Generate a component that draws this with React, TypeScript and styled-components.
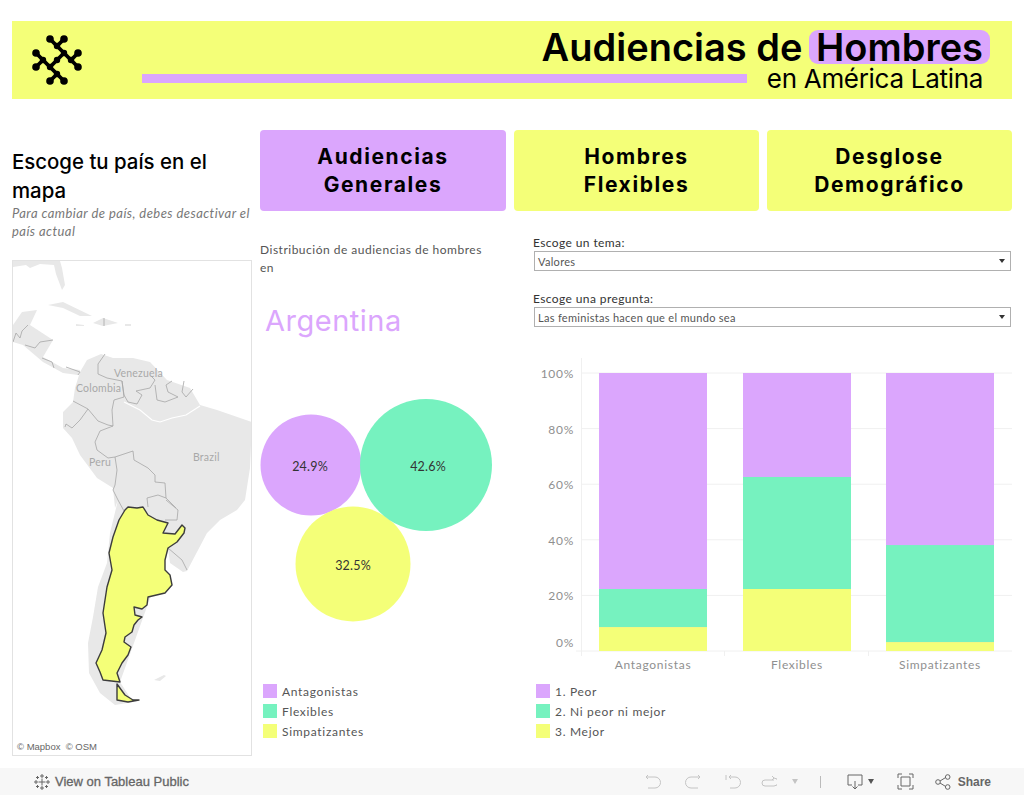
import React from 'react';
import styled, { createGlobalStyle } from 'styled-components';

const PURPLE = '#dba6fd';
const GREEN = '#76f2bf';
const YELLOW = '#f4ff78';

const GlobalStyle = createGlobalStyle`
    html, body {
        margin: 0;
        padding: 0;
        background: #fff;
        font-family: 'Lato', 'Liberation Sans', sans-serif;
    }
`;

const Logo = () => (
    <LogoSvg viewBox="-2 -1 50 50" aria-hidden="true">
        <g stroke="#000" strokeWidth="3.8" fill="none" strokeLinecap="round">
            <path d="M16 3 23 10 30 3" />
            <path d="M23 10 30 17 37 24 44 17M37 24 44 31" />
            <path d="M30 17 23 24 16 31 9 24 2 17M9 24 2 31" />
            <path d="M16 31 23 38 16 45M23 38 30 45" />
        </g>
        <g fill="#000">
            {[
                [16, 3], [30, 3], [2, 17], [44, 17], [2, 31], [44, 31], [16, 45], [30, 45],
            ].map(([cx, cy]) => (
                <circle key={`${cx}-${cy}`} cx={cx} cy={cy} r={3.8} />
            ))}
            {[
                [23, 24], [16, 31], [30, 17], [23, 38], [23, 10], [37, 24], [9, 24],
            ].map(([cx, cy]) => (
                <circle key={`${cx}-${cy}`} cx={cx} cy={cy} r={3.2} />
            ))}
        </g>
    </LogoSvg>
);

const SouthAmericaMap = () => (
    <MapSvg viewBox="12 260 240 496" aria-hidden="true">
        <g fill="#e8e8e8">
            <path d="M101 354 87 360 80 372 75 388 73 402 63 412 63 428 72 438 80 455 97 478 113 488 115 508 118 500 110 533 107 563 98 587 93 617 88 643 89 673 100 693 115 705 133 702 120 682 168 548 170 563 183 572 187 571 197 552 207 533 220 520 237 510 245 500 250 468 252 422 217 410 200 405 190 388 167 380 150 362 133 358 113 358Z" />
            <path d="M13 325 22 312 37 310 30 325 53 340 43 357 63 368 80 370 78 375 63 373 43 362 23 345 13 342Z" />
            <path d="M13 261 60 261 62 268 65 285 62 290 56 274 54 265 40 264 30 268 26 265 13 267Z" />
            <path d="M48 305 63 302 92 316 80 316 63 308Z" />
            <path d="M93 323 103 318 118 323 103 326Z" />
            <path d="M76 324 84 325 84 326 76 326ZM125 324 131 324 131 326 125 326Z" />
            <path d="M154 680 164 675 166 676 160 681Z" />
        </g>
        <g stroke="#fff" strokeWidth="1.2" fill="none">
            <path d="M124 402 140 410 152 420 160 422 172 418 186 415 200 406" />
        </g>
        <g stroke="#a6a6a6" strokeWidth="0.8" fill="none">
            <path d="M105 354 98 364 98 374 107 378 122 381 124 395 128 402 137 404 142 395 136 391 150 388 155 380 151 376" />
            <path d="M155 385 157 400 165 402 178 397 168 392 166 385 172 381 M184 381 182 392 186 397 193 389" />
            <path d="M122 381 124 397 114 400 112 410 113 426 108 425 98 421 88 409 73 401" />
            <path d="M88 409 80 420 72 428 66 424 65 427" />
            <path d="M113 426 100 431 95 442 97 450 108 458 115 457 133 451 134 460 148 468 155 475 155 482 165 483 166 498 176 508" />
            <path d="M115 457 117 470 115 485 113 490 118 500 124 511" />
            <path d="M148 507 147 498 158 495 166 498" />
            <path d="M166 500 178 510 177 520 165 520" />
            <path d="M168 548 182 560 187 570" />
            <path d="M13 342 16 333 20 338 22 331 28 325 M25 345 35 348 40 342 53 340 M42 358 52 362 54 368 M66 367 80 372 78 375" />
            <path d="M104 318 104 326" />
        </g>
        <MapLabel x="114" y="377">Venezuela</MapLabel>
        <MapLabel x="76" y="392">Colombia</MapLabel>
        <MapLabel x="89" y="466">Peru</MapLabel>
        <MapLabel x="193" y="461">Brazil</MapLabel>
        <g fill={YELLOW} stroke="#3c3c3c" strokeWidth="1.4" strokeLinejoin="round">
            <path d="M125 510 128 507 137 508 143 507 148 515 157 520 168 523 163 533 175 534 182 525 185 528 184 533 177 542 168 548 165 560 165 570 170 575 172 585 165 593 148 597 147 605 142 609 134 607 135 615 142 617 138 620 134 625 132 632 125 637 124 642 131 647 128 655 122 663 117 673 120 682 103 680 100 672 96 663 102 650 106 633 103 613 107 587 112 570 109 553 113 537 119 520Z" />
            <path d="M117 684 125 695 133 700 139 700 128 702 117 700Z" />
        </g>
    </MapSvg>
);

const Bubbles = () => (
    <BubbleSvg viewBox="260 385 246 240" aria-hidden="true">
        <circle cx="311" cy="465" r="50.5" fill={PURPLE} />
        <circle cx="353" cy="564" r="57.5" fill={YELLOW} />
        <circle cx="426" cy="465" r="66" fill={GREEN} />
        <BubbleLabel x="310" y="471">24.9%</BubbleLabel>
        <BubbleLabel x="428" y="471">42.6%</BubbleLabel>
        <BubbleLabel x="353" y="570">32.5%</BubbleLabel>
    </BubbleSvg>
);

const AXIS_TOP = 373;
const AXIS_BOTTOM = 651;
const AXIS_HEIGHT = AXIS_BOTTOM - AXIS_TOP;

const bars = [
    { name: 'Antagonistas', x: 599, center: 653, mejor: 8.6, ni: 13.7 },
    { name: 'Flexibles', x: 743, center: 797, mejor: 22.3, ni: 40.3 },
    { name: 'Simpatizantes', x: 886, center: 940, mejor: 3.2, ni: 34.9 },
];

const StackedChart = () => (
    <ChartSvg viewBox="533 355 479 320" aria-hidden="true">
        {[0, 20, 40, 60, 80, 100].map((tick) => {
            const y = AXIS_BOTTOM - (AXIS_HEIGHT * tick) / 100;
            return (
                <g key={tick}>
                    <line x1={tick === 0 ? 576 : 581} x2="1012" y1={y} y2={y} stroke="#f0f0f0" />
                    <AxisLabel x="574" y={tick === 0 ? 647 : y + 5} textAnchor="end">
                        {tick}%
                    </AxisLabel>
                </g>
            );
        })}
        <line x1="581.5" x2="581.5" y1="358" y2="656" stroke="#f0f0f0" />
        <line x1="724.5" x2="724.5" y1="651" y2="656" stroke="#f0f0f0" />
        <line x1="868.5" x2="868.5" y1="651" y2="656" stroke="#f0f0f0" />
        {bars.map((bar) => {
            const mejorH = (AXIS_HEIGHT * bar.mejor) / 100;
            const niH = (AXIS_HEIGHT * bar.ni) / 100;
            return (
                <g key={bar.name}>
                    <rect x={bar.x} y={AXIS_TOP} width="108" height={AXIS_HEIGHT} fill={PURPLE} />
                    <rect x={bar.x} y={AXIS_BOTTOM - mejorH - niH} width="108" height={niH} fill={GREEN} />
                    <rect x={bar.x} y={AXIS_BOTTOM - mejorH} width="108" height={mejorH} fill={YELLOW} />
                    <AxisLabel x={bar.center} y="669" textAnchor="middle">
                        {bar.name}
                    </AxisLabel>
                </g>
            );
        })}
    </ChartSvg>
);

const Legend = ({ items, top }: { items: [string, string][]; top: number }) => (
    <LegendList $top={top}>
        {items.map(([label, color]) => (
            <LegendRow key={label}>
                <Swatch $color={color} />
                {label}
            </LegendRow>
        ))}
    </LegendList>
);

const App = () => (
    <Page>
        <GlobalStyle />
        <Header>
            <Logo />
            <TitleBlock>
                <TitleRow>
                    Audiencias de <Highlight>Hombres</Highlight>
                </TitleRow>
                <SubRow>
                    <TitleBar />
                    <Subtitle>en América Latina</Subtitle>
                </SubRow>
            </TitleBlock>
        </Header>

        <Main>
            <LeftColumn>
                <Heading>Escoge tu país en el mapa</Heading>
                <Hint>Para cambiar de país, debes desactivar el país actual</Hint>
                <MapFrame>
                    <SouthAmericaMap />
                    <Attribution>© Mapbox  © OSM</Attribution>
                </MapFrame>
            </LeftColumn>

            <RightArea>
                <Tabs>
                    <Tab $active>
                        Audiencias
                        <br />
                        Generales
                    </Tab>
                    <Tab>
                        Hombres
                        <br />
                        Flexibles
                    </Tab>
                    <Tab>
                        Desglose
                        <br />
                        Demográfico
                    </Tab>
                </Tabs>

                <Panels>
                    <MidPanel>
                        <Intro>Distribución de audiencias de hombres en</Intro>
                        <Country>Argentina</Country>
                        <Bubbles />
                        <Legend
                            top={56}
                            items={[
                                ['Antagonistas', PURPLE],
                                ['Flexibles', GREEN],
                                ['Simpatizantes', YELLOW],
                            ]}
                        />
                    </MidPanel>

                    <ChartPanel>
                        <FilterLabel>Escoge un tema:</FilterLabel>
                        <FilterSelect>
                            Valores
                            <SelectCaret />
                        </FilterSelect>
                        <FilterLabel $spaced>Escoge una pregunta:</FilterLabel>
                        <FilterSelect>
                            Las feministas hacen que el mundo sea
                            <SelectCaret />
                        </FilterSelect>
                        <StackedChart />
                        <Legend
                            top={6}
                            items={[
                                ['1. Peor', PURPLE],
                                ['2. Ni peor ni mejor', GREEN],
                                ['3. Mejor', YELLOW],
                            ]}
                        />
                    </ChartPanel>
                </Panels>
            </RightArea>
        </Main>

        <Toolbar>
            <PublicLink>
                <ToolIcon width="18" height="18" viewBox="0 0 18 18">
                    <path d="M9 5.500v7M5.500 9h7M9 1v4M7 3h4M9 13v4M7 15h4M1 9h4M3 7v4M13 9h4M15 7v4M4.500 3v3M3 4.500h3M13.500 3v3M12 4.500h3M4.500 12v3M3 13.500h3M13.500 12v3M12 13.500h3" />
                </ToolIcon>
                View on Tableau Public
            </PublicLink>
            <ToolGroup>
                <ToolIcon $disabled width="16" height="16" viewBox="0 0 16 16">
                    <path d="M1 3h9a5 5 0 0 1 0 11H3M3 1 1 3l2 2" />
                </ToolIcon>
                <ToolIcon $disabled $gap={24} width="16" height="16" viewBox="0 0 16 16">
                    <path d="M15 3H6a5 5 0 0 0 0 11h7M13 1l2 2-2 2" />
                </ToolIcon>
                <ToolIcon $disabled $gap={24} width="16" height="16" viewBox="0 0 16 16">
                    <path d="M1 1v5M4 3h6a5 5 0 0 1 0 11H5M6 1 4 3l2 2" />
                </ToolIcon>
                <ToolIcon $disabled $gap={20} width="16" height="16" viewBox="0 0 16 16">
                    <path d="M12 4h1a3 3 0 0 1 0 8H4a3 3 0 0 1 0-6h9M11 2l2 2-2 2" />
                </ToolIcon>
                <ToolCaret $disabled $gap={15} />
                <ToolDivider />
                <ToolIcon $gap={26} width="16" height="16" viewBox="0 0 16 16">
                    <path d="M5 11H1V1h14v10h-4M8 7v8M5.500 12.500 8 15l2.500-2.500" />
                </ToolIcon>
                <ToolCaret $gap={5} />
                <ToolIcon $gap={23} width="17" height="17" viewBox="0 0 17 17">
                    <path d="M1 5V1h4M12 1h4v4M16 12v4h-4M5 16H1v-4M4 4h9v9H4z" />
                </ToolIcon>
                <ToolIcon $gap={21} width="16" height="16" viewBox="0 0 16 16">
                    <path d="M5 7 10.500 3.600M5 9l5.500 3.400" />
                    <circle cx="3" cy="8" r="2.300" />
                    <circle cx="12.700" cy="3" r="2.300" />
                    <circle cx="12.700" cy="13" r="2.300" />
                </ToolIcon>
                <ShareLabel>Share</ShareLabel>
            </ToolGroup>
        </Toolbar>
    </Page>
);

const Page = styled.div`
    width: 1024px;
    height: 795px;
    display: flex;
    flex-direction: column;
    overflow: hidden;
`;

const Header = styled.header`
    height: 78px;
    margin: 21px 12px 0;
    background: ${YELLOW};
    display: flex;
    align-items: flex-start;
`;

const LogoSvg = styled.svg`
    width: 50px;
    height: 50px;
    margin: 14px 0 0 20px;
    flex: none;
`;

const TitleBlock = styled.div`
    flex: 1;
    display: flex;
    flex-direction: column;
    padding: 9px 22px 0 60px;
    font-family: 'Inter', 'Liberation Sans', sans-serif;
    color: #000;
`;

const TitleRow = styled.div`
    height: 34px;
    font-size: 38px;
    line-height: 34px;
    font-weight: 600;
    letter-spacing: 0;
    text-align: right;
    white-space: pre;
`;

const Highlight = styled.span`
    display: inline-block;
    background: ${PURPLE};
    border-radius: 9px;
    padding: 0 7px;
    margin-left: -3px;
`;

const SubRow = styled.div`
    display: flex;
    align-items: center;
    justify-content: space-between;
`;

const TitleBar = styled.div`
    width: 605px;
    height: 9px;
    margin-top: 1px;
    background: ${PURPLE};
`;

const Subtitle = styled.div`
    margin: 1px 7px 0 0;
    font-size: 26px;
    line-height: 27px;
    font-weight: 400;
    letter-spacing: -0.3px;
`;

const Main = styled.main`
    flex: 1;
    min-height: 0;
    display: grid;
    grid-template-columns: 240px 752px;
    column-gap: 8px;
    padding: 31px 12px 0;
`;

const LeftColumn = styled.section`
    display: flex;
    flex-direction: column;
`;

const Heading = styled.h2`
    margin: 17px 0 0;
    font-family: 'Inter', 'Liberation Sans', sans-serif;
    font-size: 20.4px;
    line-height: 29px;
    font-weight: 500;
    color: #000;
`;

const Hint = styled.p`
    margin: -1px 0 0;
    font-size: 13px;
    line-height: 18px;
    font-style: italic;
    letter-spacing: 0.45px;
    color: #777;
`;

const MapFrame = styled.div`
    position: relative;
    width: 240px;
    height: 496px;
    margin-top: 20px;
    box-sizing: border-box;
    border: 1px solid #e2e2e2;
    overflow: hidden;
`;

const MapSvg = styled.svg`
    display: block;
    width: 240px;
    height: 496px;
    margin: -1px;
`;

const MapLabel = styled.text`
    font-size: 10.5px;
    letter-spacing: 0.2px;
    fill: #a8a8a8;
`;

const Attribution = styled.div`
    position: absolute;
    left: 2px;
    bottom: 2px;
    padding: 0 2px;
    font-family: 'Liberation Sans', sans-serif;
    font-size: 9.5px;
    line-height: 13px;
    white-space: pre;
    color: #666;
    background: rgba(255, 255, 255, 0.7);
`;

const RightArea = styled.section`
    display: flex;
    flex-direction: column;
`;

const Tabs = styled.nav`
    display: grid;
    grid-template-columns: 246px 245px 245px;
    column-gap: 8px;
`;

const Tab = styled.div<{ $active?: boolean }>`
    height: 81px;
    display: flex;
    align-items: center;
    justify-content: center;
    text-align: center;
    background: ${(p) => (p.$active ? PURPLE : YELLOW)};
    border-radius: 4px;
    font-family: 'Inter', 'Liberation Sans', sans-serif;
    font-size: 21px;
    line-height: 28px;
    font-weight: 700;
    letter-spacing: 1.6px;
    color: #000;
`;

const Panels = styled.div`
    display: grid;
    grid-template-columns: 246px 478px;
    column-gap: 27px;
    margin-top: 21px;
`;

const MidPanel = styled.div`
    display: flex;
    flex-direction: column;
    padding-top: 9px;
`;

const Intro = styled.p`
    margin: 0;
    width: 232px;
    font-size: 12px;
    line-height: 18px;
    letter-spacing: 0.5px;
    color: #555;
`;

const Country = styled.div`
    margin: 26px 0 0 5px;
    font-family: 'Inter', 'Liberation Sans', sans-serif;
    font-size: 29px;
    line-height: 36px;
    letter-spacing: 0.5px;
    color: ${PURPLE};
`;

const BubbleSvg = styled.svg`
    display: block;
    width: 246px;
    height: 240px;
    margin-top: 46px;
`;

const BubbleLabel = styled.text`
    font-size: 12.5px;
    letter-spacing: 0.2px;
    fill: #333;
    text-anchor: middle;
`;

const LegendList = styled.ul<{ $top: number }>`
    list-style: none;
    margin: ${(p) => p.$top}px 0 0 3px;
    padding: 0;
`;

const LegendRow = styled.li`
    display: flex;
    align-items: center;
    gap: 5px;
    height: 20px;
    font-size: 12px;
    letter-spacing: 0.7px;
    color: #555;
`;

const Swatch = styled.span<{ $color: string }>`
    width: 14px;
    height: 14px;
    flex: none;
    background: ${(p) => p.$color};
`;

const ChartPanel = styled.div`
    display: flex;
    flex-direction: column;
    align-items: flex-start;
    padding-top: 3px;
`;

const FilterLabel = styled.div<{ $spaced?: boolean }>`
    margin-top: ${(p) => (p.$spaced ? '20px' : '0')};
    font-size: 12px;
    line-height: 15px;
    letter-spacing: 0.4px;
    color: #333;
`;

const FilterSelect = styled.div`
    box-sizing: border-box;
    width: 477px;
    height: 20px;
    margin: 1px 0 0 1px;
    padding: 0 4px 0 3px;
    display: flex;
    align-items: center;
    justify-content: space-between;
    border: 1px solid #b0b0b0;
    font-size: 11px;
    letter-spacing: 0.3px;
    color: #555;
`;

const SelectCaret = styled.span`
    width: 0;
    height: 0;
    margin-right: 1px;
    border-left: 3px solid transparent;
    border-right: 3px solid transparent;
    border-top: 4px solid #333;
`;

const ChartSvg = styled.svg`
    display: block;
    width: 479px;
    height: 320px;
    margin-top: 28px;
`;

const AxisLabel = styled.text`
    font-size: 12px;
    letter-spacing: 0.7px;
    fill: #8f8f8f;
`;

const Toolbar = styled.footer`
    height: 27px;
    flex: none;
    display: flex;
    align-items: center;
    justify-content: space-between;
    padding: 0 33px;
    background: #f7f7f7;
    font-family: 'Liberation Sans', sans-serif;
    font-size: 12px;
    font-weight: 700;
    color: #666;
`;

const PublicLink = styled.div`
    display: flex;
    align-items: center;
    gap: 4px;
    font-size: 13px;
    font-weight: 400;
    -webkit-text-stroke: 0.3px #666;
`;

const ToolGroup = styled.div`
    display: flex;
    align-items: center;
`;

const ToolIcon = styled.svg<{ $disabled?: boolean; $gap?: number }>`
    flex: none;
    margin-left: ${(p) => p.$gap ?? 0}px;
    fill: none;
    stroke: ${(p) => (p.$disabled ? '#c4c4c4' : '#666')};
`;

const ToolCaret = styled.span<{ $disabled?: boolean; $gap?: number }>`
    width: 0;
    height: 0;
    margin-left: ${(p) => p.$gap ?? 0}px;
    border-left: 3.5px solid transparent;
    border-right: 3.5px solid transparent;
    border-top: 5px solid ${(p) => (p.$disabled ? '#c4c4c4' : '#555')};
`;

const ToolDivider = styled.span`
    width: 1px;
    height: 12px;
    margin-left: 22px;
    background: #bbb;
`;

const ShareLabel = styled.span`
    margin-left: 7px;
`;

export default App;
